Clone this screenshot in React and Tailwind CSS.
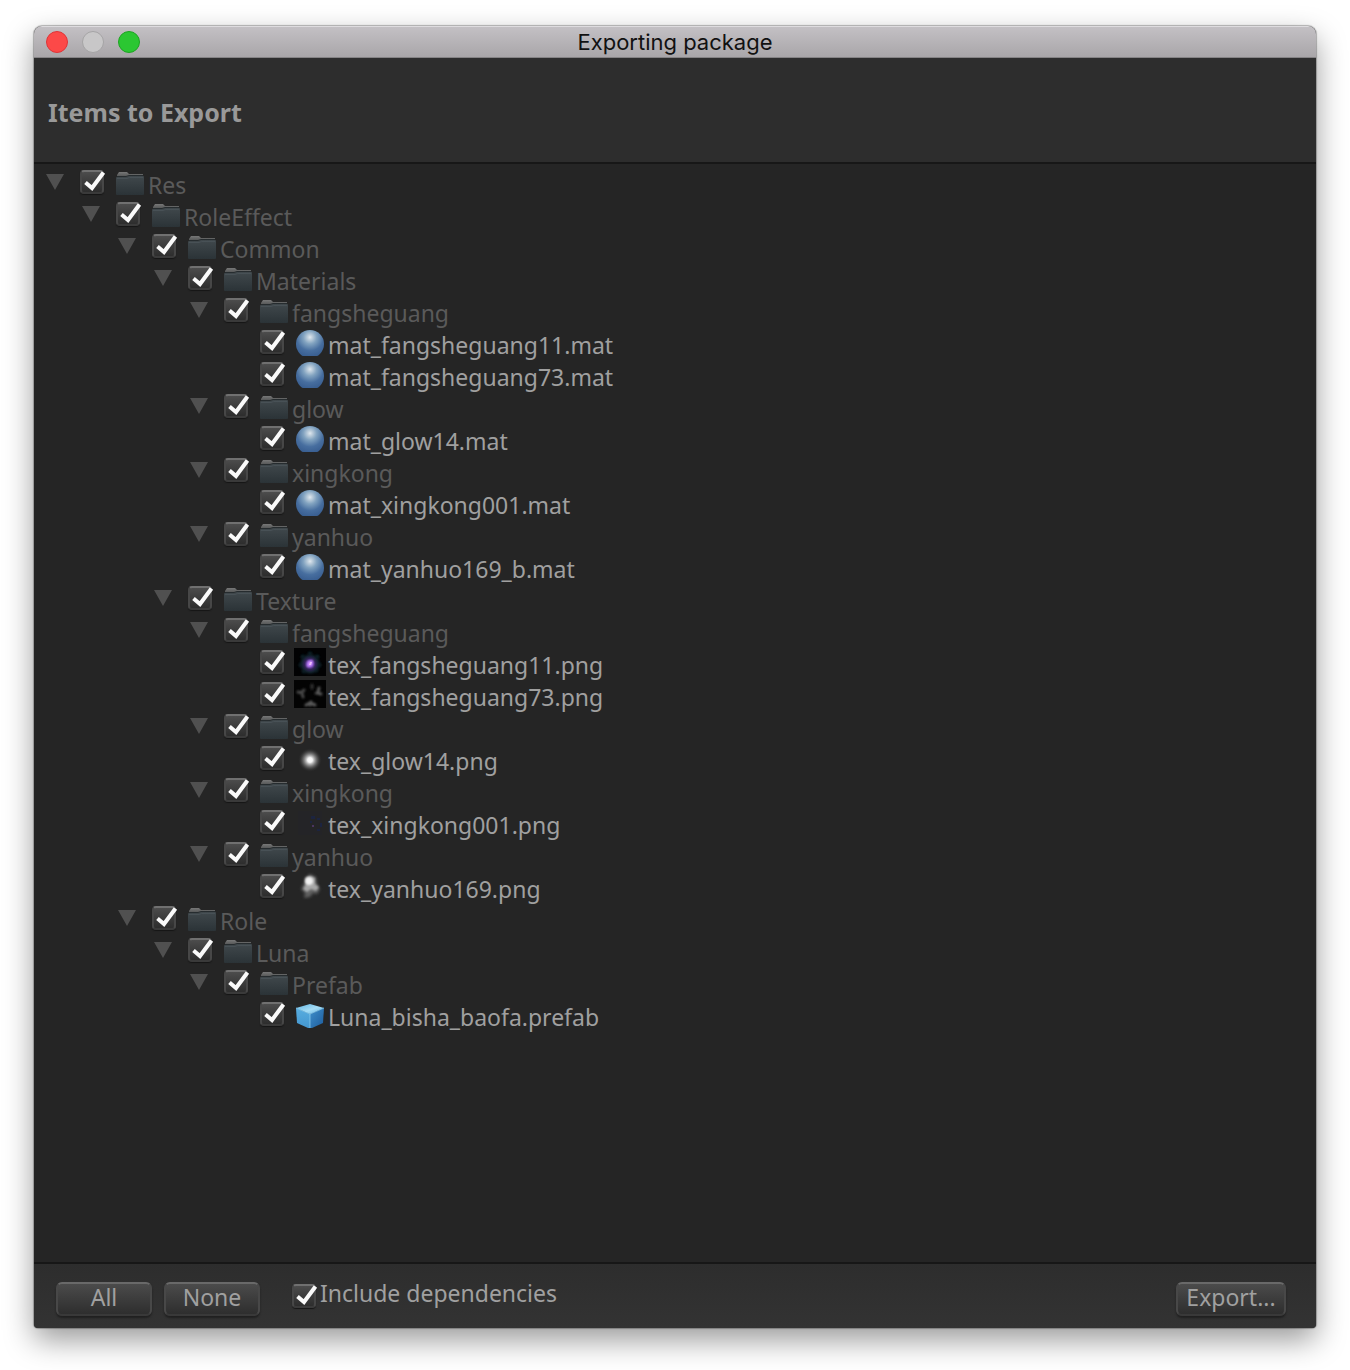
import { useState } from "react";

const ITEMS = [
  { name: "Res", depth: 0, kind: "folder" },
  { name: "RoleEffect", depth: 1, kind: "folder" },
  { name: "Common", depth: 2, kind: "folder" },
  { name: "Materials", depth: 3, kind: "folder" },
  { name: "fangsheguang", depth: 4, kind: "folder" },
  { name: "mat_fangsheguang11.mat", depth: 5, kind: "material" },
  { name: "mat_fangsheguang73.mat", depth: 5, kind: "material" },
  { name: "glow", depth: 4, kind: "folder" },
  { name: "mat_glow14.mat", depth: 5, kind: "material" },
  { name: "xingkong", depth: 4, kind: "folder" },
  { name: "mat_xingkong001.mat", depth: 5, kind: "material" },
  { name: "yanhuo", depth: 4, kind: "folder" },
  { name: "mat_yanhuo169_b.mat", depth: 5, kind: "material" },
  { name: "Texture", depth: 3, kind: "folder" },
  { name: "fangsheguang", depth: 4, kind: "folder" },
  { name: "tex_fangsheguang11.png", depth: 5, kind: "burst" },
  { name: "tex_fangsheguang73.png", depth: 5, kind: "wisps" },
  { name: "glow", depth: 4, kind: "folder" },
  { name: "tex_glow14.png", depth: 5, kind: "glow" },
  { name: "xingkong", depth: 4, kind: "folder" },
  { name: "tex_xingkong001.png", depth: 5, kind: "stars" },
  { name: "yanhuo", depth: 4, kind: "folder" },
  { name: "tex_yanhuo169.png", depth: 5, kind: "smoke" },
  { name: "Role", depth: 2, kind: "folder" },
  { name: "Luna", depth: 3, kind: "folder" },
  { name: "Prefab", depth: 4, kind: "folder" },
  { name: "Luna_bisha_baofa.prefab", depth: 5, kind: "prefab" },
];

const INDENT = ["pl-[10px]", "pl-[46px]", "pl-[82px]", "pl-[118px]", "pl-[154px]", "pl-[190px]"];

function Gradients() {
  return (
    <svg className="absolute size-0" aria-hidden="true">
      <defs>
        <linearGradient id="folderBody" x1="0" y1="0" x2="0" y2="1">
          <stop offset="0" stopColor="#40484c" />
          <stop offset="1" stopColor="#2b3337" />
        </linearGradient>
        <linearGradient id="folderTab" x1="0" y1="0" x2="0" y2="1">
          <stop offset="0" stopColor="#777777" />
          <stop offset="1" stopColor="#484a4b" />
        </linearGradient>
        <radialGradient id="sphere" cx="0.5" cy="0.26" r="0.74">
          <stop offset="0" stopColor="#e0e8ef" />
          <stop offset="0.12" stopColor="#bccddb" />
          <stop offset="0.32" stopColor="#82a3c0" />
          <stop offset="0.65" stopColor="#476e9f" />
          <stop offset="1" stopColor="#365b8e" />
        </radialGradient>
        <radialGradient id="burstHalo">
          <stop offset="0" stopColor="#e0a0ff" />
          <stop offset="0.2" stopColor="#8450c8" />
          <stop offset="0.45" stopColor="#322357" />
          <stop offset="0.7" stopColor="#10202a" />
          <stop offset="1" stopColor="#020406" stopOpacity="0" />
        </radialGradient>
        <radialGradient id="whiteGlow">
          <stop offset="0" stopColor="#ffffff" />
          <stop offset="0.2" stopColor="#f4f4f4" />
          <stop offset="0.5" stopColor="#999999" stopOpacity="0.75" />
          <stop offset="0.8" stopColor="#444444" stopOpacity="0.45" />
          <stop offset="1" stopColor="#262626" stopOpacity="0" />
        </radialGradient>
        <linearGradient id="cubeTop" x1="0" y1="0" x2="1" y2="1">
          <stop offset="0" stopColor="#5fb4e2" />
          <stop offset="0.55" stopColor="#a5dcf5" />
          <stop offset="1" stopColor="#5cb2e2" />
        </linearGradient>
        <linearGradient id="cubeLeft" x1="0" y1="0" x2="0" y2="1">
          <stop offset="0" stopColor="#58addf" />
          <stop offset="1" stopColor="#4497d0" />
        </linearGradient>
        <linearGradient id="cubeRight" x1="0" y1="0" x2="1" y2="1">
          <stop offset="0" stopColor="#3f90cb" />
          <stop offset="1" stopColor="#1d5c9d" />
        </linearGradient>
        <filter id="soft1" x="-50%" y="-50%" width="200%" height="200%">
          <feGaussianBlur stdDeviation="1" />
        </filter>
        <filter id="soft2" x="-50%" y="-50%" width="200%" height="200%">
          <feGaussianBlur stdDeviation="1.6" />
        </filter>
      </defs>
    </svg>
  );
}

function ItemIcon({ kind }) {
  return (
    <svg viewBox="0 0 32 28" className="h-7 w-8 shrink-0" aria-hidden="true">
      {kind === "folder" && (
        <>
          <path d="M3 10V7l2-3h8l2 2h14v4z" fill="url(#folderTab)" />
          <path d="M2 10q0-1 1-1h9l2-1h15q1 0 1 1v17q0 1-1 1H3q-1 0-1-1z" fill="url(#folderBody)" />
          <path d="M3 8.500h9l3-1h14" fill="none" stroke="#262c2f" />
          <path d="M3 10.500h10l2.500-1H29" fill="none" stroke="#485156" />
        </>
      )}
      {kind === "material" && <circle cx="16" cy="16" r="14" fill="url(#sphere)" />}
      {kind === "burst" && (
        <>
          <rect width="32" height="28" fill="#020203" />
          <g filter="url(#soft1)" fill="#17404a" opacity="0.8">
            <circle cx="9" cy="9" r="2" />
            <circle cx="16" cy="6" r="2" />
            <circle cx="23" cy="9" r="2" />
            <circle cx="7" cy="17" r="2" />
            <circle cx="10" cy="23" r="2" />
            <circle cx="25" cy="17" r="2" />
            <circle cx="22" cy="22" r="2" />
          </g>
          <circle cx="16" cy="16" r="12" fill="url(#burstHalo)" />
          <path d="M13 19l1-6 5-1-1 6z" fill="#c888ff" filter="url(#soft1)" />
          <path d="M15 17l1-3 2 0-1 3z" fill="#efc0ff" />
        </>
      )}
      {kind === "wisps" && (
        <>
          <rect width="32" height="28" fill="#030303" />
          <g filter="url(#soft1)" fill="none" stroke="#5a5a5a" strokeWidth="3" strokeLinecap="round">
            <path d="M4 12l4 1 1 4M10 10l-2 2" stroke="#484848" />
            <path d="M18 5v3" stroke="#333333" />
            <path d="M25 8l-1 4-1 1 4 1" />
            <path d="M12 25l4-2 5 2M17 22l-1 3" />
          </g>
        </>
      )}
      {kind === "glow" && <circle cx="16" cy="16" r="12" fill="url(#whiteGlow)" />}
      {kind === "stars" && (
        <>
          <rect x="4" y="3" width="24" height="24" fill="#242427" />
          <g fill="#1c2440">
            <rect x="17" y="8" width="4" height="3" />
            <rect x="23" y="10" width="3" height="2" />
            <rect x="26" y="15" width="2" height="4" />
            <rect x="23" y="21" width="3" height="2" />
            <rect x="16" y="13" width="2" height="2" />
          </g>
          <rect x="18" y="17" width="2" height="2" fill="#4b3560" />
        </>
      )}
      {kind === "smoke" && (
        <>
          <path d="M11 6l5-4 6 3 1 7 3 5-3 5-4-1-3 4-6 1 1-5-4-4 3-5z" fill="#6a6a6a" opacity="0.85" filter="url(#soft2)" />
          <path d="M12 6l4-2 5 2v6l4 3-3 4-5-2-4 3-4-3 3-5z" fill="#b5b5b5" opacity="0.85" filter="url(#soft1)" />
          <circle cx="15" cy="9" r="4" fill="#f0f0f0" filter="url(#soft1)" />
        </>
      )}
      {kind === "prefab" && (
        <>
          <path d="M2 8l14-4 14 4-14 6z" fill="url(#cubeTop)" />
          <path d="M2 8l14 6v14h-2L3 23z" fill="url(#cubeLeft)" />
          <path d="M30 8l-14 6v14h2l11-5z" fill="url(#cubeRight)" />
          <path d="M2 8l14 6 14-6M16 14v14" fill="none" stroke="#8fd0f2" strokeOpacity="0.7" />
        </>
      )}
    </svg>
  );
}

function CheckBox({ id, checked, onChange }) {
  return (
    <span className="relative block size-6 shrink-0">
      <input
        id={id}
        type="checkbox"
        checked={checked}
        onChange={onChange}
        className="block size-6 appearance-none rounded-[4px] border-2 border-[#474747] border-t-[#707070] border-b-[#3a3a3a] bg-linear-to-b from-[#4c4c4c] to-[#2d2d2d] shadow-[0_1px_1px_#161616]"
      />
      {checked && (
        <svg viewBox="0 0 28 24" className="pointer-events-none absolute top-0 left-0 h-6 w-7" aria-hidden="true">
          <path d="M5.500 12.500L12 18 23.500 2.500" fill="none" stroke="#fafafa" strokeWidth="4" />
        </svg>
      )}
    </span>
  );
}

function PushButton({ children, className, onClick }) {
  return (
    <button
      type="button"
      onClick={onClick}
      className={
        "flex h-[34px] items-start justify-center rounded-[6px] border-2 border-[#484848] border-t-[#696969] border-b-[#393939] bg-linear-to-b from-[#4b4b4b] to-[#2e2e2e] text-[23px] leading-[26px] whitespace-nowrap text-[#a0a0a0] shadow-[0_2px_2px_#202020] " +
        className
      }
    >
      {children}
    </button>
  );
}

export default function App() {
  const [checks, setChecks] = useState(ITEMS.map(() => true));
  const [deps, setDeps] = useState(true);
  const toggle = (i) => setChecks(checks.map((c, j) => (j === i ? !c : c)));

  return (
    <div className="flex min-h-screen bg-white px-[34px] pt-[26px] pb-[42px] font-['Noto_Sans',sans-serif]">
      <Gradients />
      <main className="flex flex-1 flex-col overflow-hidden rounded-t-[8px] rounded-b-[4px] bg-[#2d2d2d] shadow-[0_0_1px_1px_#00000044,0_12px_30px_#00000066]">
        <header className="grid h-8 grid-cols-[1fr_auto_1fr] items-center border-t border-b border-t-[#dedcdf] border-b-[#858385] bg-linear-to-b from-[#c3c0c4] to-[#a9a6a9] px-3">
          <div className="flex gap-[14px]">
            <button type="button" aria-label="Close" className="size-[22px] rounded-full border border-[#df3437] bg-[#fc4948]" />
            <button type="button" aria-label="Minimize" className="size-[22px] rounded-full border border-[#a5a4a5] bg-[#c8c7c8]" />
            <button type="button" aria-label="Zoom" className="size-[22px] rounded-full border border-[#1da422] bg-[#2bc732]" />
          </div>
          <span className="font-[Inter,sans-serif] text-[22px] leading-7 text-[#111111]">Exporting package</span>
        </header>

        <section className="flex h-[106px] items-center border-b-2 border-[#171717] px-[14px]">
          <h1 className="pt-1 text-[25px] leading-8 font-bold text-[#999999]">Items to Export</h1>
        </section>

        <ul className="flex flex-1 flex-col bg-[#252525] pt-1 pb-4">
          {ITEMS.map((item, i) => {
            const folder = item.kind === "folder";
            return (
              <li key={i} className={"flex h-8 items-start " + INDENT[item.depth]}>
                <span className="w-9 shrink-0 pt-[6px] pl-[2px]">
                  {folder && (
                    <svg viewBox="0 0 18 16" className="h-4 w-[18px]" aria-hidden="true">
                      <path d="M0 0h18L9 16z" fill="#505050" />
                    </svg>
                  )}
                </span>
                <span className="w-[34px] shrink-0 pt-[2px]">
                  <CheckBox id={"item-" + i} checked={checks[i]} onChange={() => toggle(i)} />
                </span>
                <label htmlFor={"item-" + i} className="flex items-start gap-[2px]">
                  <ItemIcon kind={item.kind} />
                  <span className={"text-[23px] leading-[34px] whitespace-nowrap " + (folder ? "text-[#5a5a5a]" : "text-[#a0a0a0]")}>
                    {item.name}
                  </span>
                </label>
              </li>
            );
          })}
        </ul>

        <footer className="flex h-[66px] items-start border-t-2 border-[#171717] bg-linear-to-b from-[#2d2d2d] to-[#333333] pt-[18px] pr-[30px] pl-[22px]">
          <PushButton className="w-24" onClick={() => setChecks(ITEMS.map(() => true))}>All</PushButton>
          <PushButton className="ml-3 w-24" onClick={() => setChecks(ITEMS.map(() => false))}>None</PushButton>
          <div className="ml-8 flex items-start gap-1">
            <span className="pt-[2px]">
              <CheckBox id="deps" checked={deps} onChange={() => setDeps(!deps)} />
            </span>
            <label htmlFor="deps" className="text-[23px] leading-[22px] text-[#a0a0a0]">Include dependencies</label>
          </div>
          <PushButton className="ml-auto w-[110px]">Export...</PushButton>
        </footer>
      </main>
    </div>
  );
}
